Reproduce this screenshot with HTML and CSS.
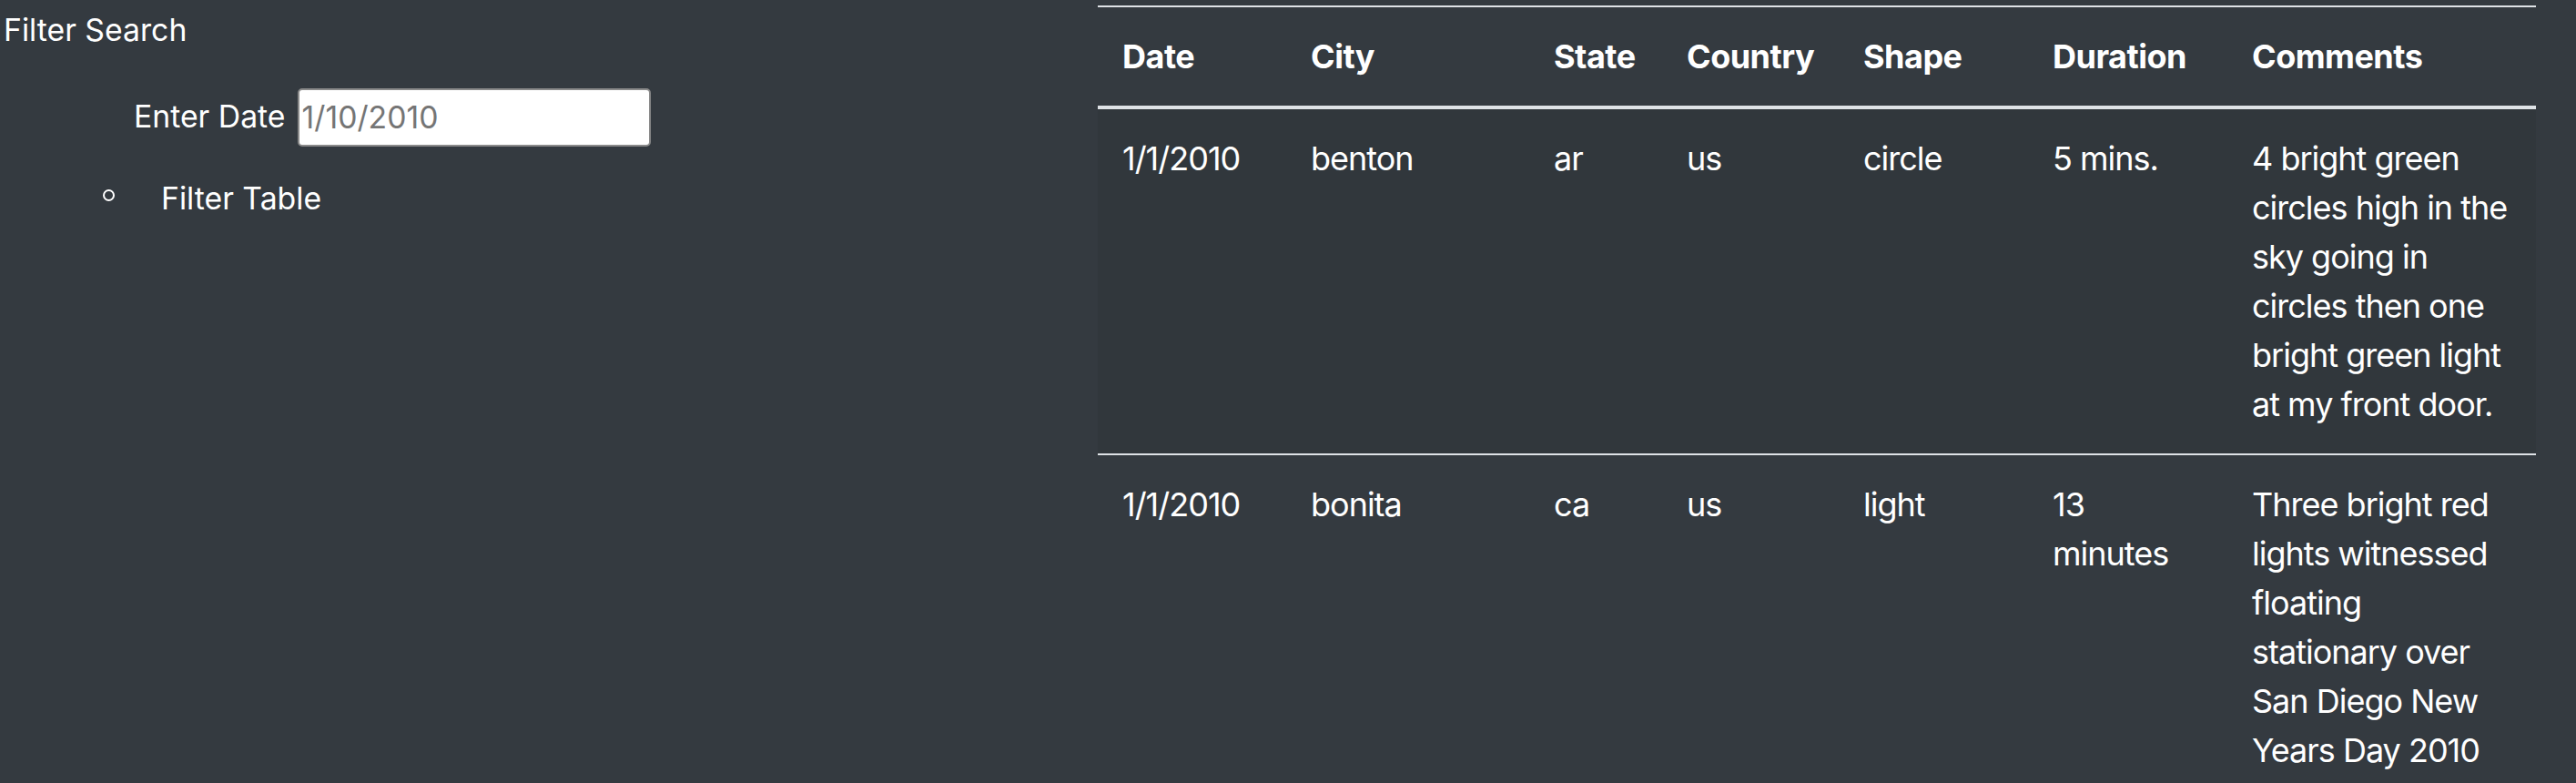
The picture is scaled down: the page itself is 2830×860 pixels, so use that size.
FILE: index.html
```html
<!DOCTYPE html>
<html lang="en">
<head>
<meta charset="utf-8">
<title>UFO Sightings</title>
<link rel="stylesheet" href="styles.css">
</head>
<body>
<div class="page">
  <aside class="filters">
    <div class="filters-heading">Filter Search</div>
    <div class="filter-row">
      <label class="filter-label" for="datetime">Enter Date</label>
      <input class="filter-input" id="datetime" type="text" placeholder="1/10/2010">
    </div>
    <div class="filter-action">
      <span class="bullet"></span>
      <span class="filter-btn">Filter Table</span>
    </div>
  </aside>
  <main class="results">
    <table class="ufo-table">
      <thead>
        <tr>
          <th class="col-date">Date</th>
          <th class="col-city">City</th>
          <th class="col-state">State</th>
          <th class="col-country">Country</th>
          <th class="col-shape">Shape</th>
          <th class="col-duration">Duration</th>
          <th class="col-comments">Comments</th>
        </tr>
      </thead>
      <tbody>
        <tr>
          <td>1/1/2010</td>
          <td>benton</td>
          <td>ar</td>
          <td>us</td>
          <td>circle</td>
          <td>5 mins.</td>
          <td>4 bright green circles high in the sky going in circles then one bright green light at my front door.</td>
        </tr>
        <tr>
          <td>1/1/2010</td>
          <td>bonita</td>
          <td>ca</td>
          <td>us</td>
          <td>light</td>
          <td>13 minutes</td>
          <td>Three bright red lights witnessed floating stationary over San Diego New Years Day 2010</td>
        </tr>
      </tbody>
    </table>
  </main>
</div>
</body>
</html>
```

FILE: styles.css
```css
html, body {
  margin: 0;
  padding: 0;
  background: #343a40;
  color: #ffffff;
  font-family: Inter, "Noto Sans", sans-serif;
}

.page {
  display: flex;
  align-items: flex-start;
  padding-top: 6px;
  height: 854px;
  overflow: hidden;
}

.filters {
  width: 1202px;
  padding-left: 4px;
  flex: none;
  font-size: 33.75px;
  line-height: 50.6px;
}

.filters-heading {
  margin-top: 2px;
}

.filter-row {
  display: flex;
  align-items: center;
  margin-top: 38px;
  padding-left: 143px;
  gap: 13px;
}

.filter-input {
  box-sizing: border-box;
  width: 388px;
  height: 64px;
  border: 2px solid #8a8a8a;
  border-radius: 5px;
  padding: 0 3px;
  background: #ffffff;
  color: #333;
  font-family: Inter, "Noto Sans", sans-serif;
  font-size: 33.75px;
}

.filter-input::placeholder {
  color: #757575;
}

.filter-action {
  display: flex;
  align-items: center;
  margin-top: 32px;
  padding-left: 109px;
}

.bullet {
  box-sizing: border-box;
  width: 13px;
  height: 13px;
  border: 2px solid #ffffff;
  border-radius: 50%;
  margin-right: 51px;
  margin-top: -6px;
}

.results {
  flex: none;
}

.ufo-table {
  width: 1580px;
  border-collapse: separate;
  border-spacing: 0;
  font-size: 36px;
  line-height: 54px;
  color: #ffffff;
  table-layout: fixed;
}

.ufo-table th,
.ufo-table td {
  padding: 27px;
  text-align: left;
  vertical-align: top;
}

.ufo-table td {
  letter-spacing: -1px;
}

.ufo-table th {
  font-weight: 700;
  letter-spacing: -0.5px;
  border-top: 2px solid #dee2e6;
  border-bottom: 4px solid #dee2e6;
}

.ufo-table tbody tr:nth-child(odd) {
  background: rgba(0, 0, 0, 0.05);
}

.ufo-table tbody tr + tr td {
  border-top: 2px solid #dee2e6;
}

.col-date { width: 153px; }
.col-city { width: 213px; }
.col-state { width: 92px; }
.col-country { width: 140px; }
.col-shape { width: 154px; }
.col-duration { width: 165px; }
.col-comments { width: 285px; }
```
